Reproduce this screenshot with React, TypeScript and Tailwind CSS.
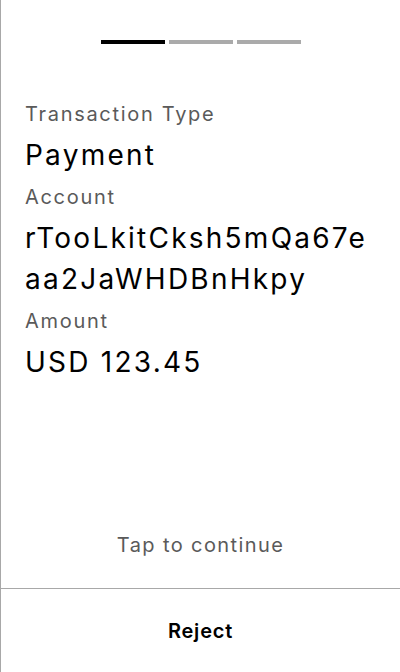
import React from "react";

export default function App() {
  const font = { fontFamily: "Inter, 'Noto Sans', sans-serif" };
  return (
    <div style={font} className="w-[400px] h-[672px] bg-white border-l border-[#a8a8a8] flex flex-col">
      <div className="flex justify-center gap-1 pt-10">
        <div className="w-16 h-1 bg-black" />
        <div className="w-16 h-1 bg-[#aaaaaa]" />
        <div className="w-16 h-1 bg-[#aaaaaa]" />
      </div>
      <div className="px-6 mt-[49px] flex flex-col">
        <div className="text-[20px] leading-[42px] tracking-[0.085em] text-[#5a5a5a]">Transaction Type</div>
        <div className="text-[28px] leading-[41px] tracking-[0.08em] text-black">Payment</div>
        <div className="text-[20px] leading-[42px] tracking-[0.085em] text-[#5a5a5a]">Account</div>
        <div className="text-[28px] leading-[41px] tracking-[0.08em] text-black break-all">rTooLkitCksh5mQa67eaa2JaWHDBnHkpy</div>
        <div className="text-[20px] leading-[42px] tracking-[0.085em] text-[#5a5a5a]">Amount</div>
        <div className="text-[28px] leading-[41px] tracking-[0.08em] text-black">USD 123.45</div>
      </div>
      <div className="flex-1" />
      <div className="text-center text-[20px] leading-[28px] tracking-[0.07em] text-[#5a5a5a] pb-[29px]">Tap to continue</div>
      <div className="border-t border-[#a8a8a8] h-[84px] flex items-center justify-center">
        <span className="text-[20px] font-semibold tracking-[0.04em] text-black">Reject</span>
      </div>
    </div>
  );
}
